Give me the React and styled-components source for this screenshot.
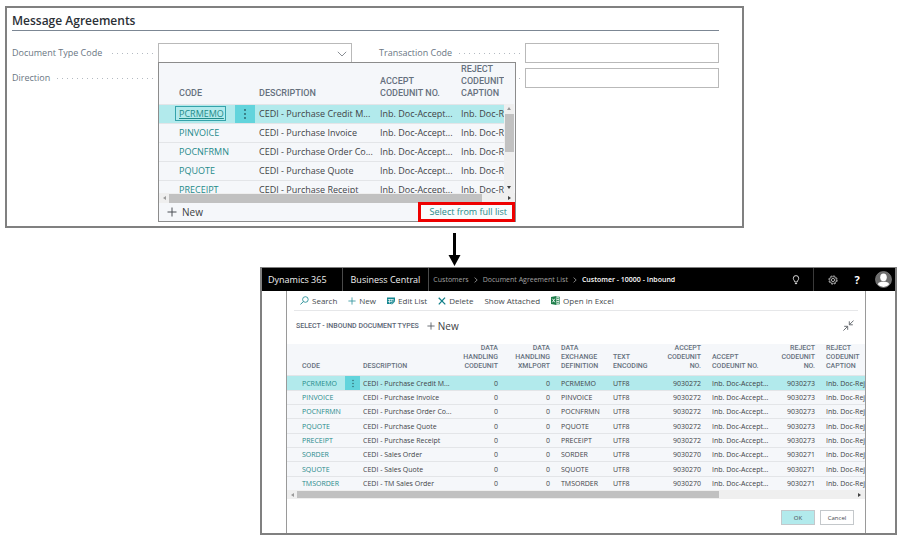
import React from "react";
import styled, { createGlobalStyle, css } from "styled-components";

const GlobalStyle = createGlobalStyle`
  *, *::before, *::after { box-sizing: border-box; }
  body { margin: 0; background: #fff; font-family: "Open Sans", "Noto Sans", sans-serif; color: #3c4043; }
  button, input, select { font: inherit; color: inherit; }
`;

const HEAD_FONT = `Roboto, "Open Sans", sans-serif`;

const Page = styled.main`
  display: flex;
  flex-direction: column;
  padding: 6px 6px 6px 5px;
`;

const buttonReset = css`
  border: 0;
  padding: 0;
  background: none;
  cursor: pointer;
`;

/* ---- Message agreements card ---- */

const Card = styled.section`
  margin-right: 153px;
  border: 2px solid #808080;
  padding: 5px 23px 138px 5px;
  background: #fff;
`;

const CardTitle = styled.h2`
  margin: 0;
  padding-bottom: 1px;
  border-bottom: 1px solid #7c8794;
  font-size: 12px;
  font-weight: 600;
  line-height: 16px;
  color: #2b3036;
`;

const FieldGrid = styled.div`
  display: grid;
  grid-template-columns: 1fr 1fr;
  gap: 5px 27px;
  margin-top: 12px;
`;

const Field = styled.div`
  position: relative;
  display: grid;
  grid-template-columns: 146px 1fr;
  align-items: center;
  height: 20px;
`;

const LabelCell = styled.div`
  display: flex;
  align-items: center;
  gap: 6px;
  padding-right: 5px;
`;

const Label = styled.label`
  font-size: 9px;
  line-height: 14px;
  color: #6a7683;
  white-space: nowrap;
`;

const Dots = styled.span`
  flex: 1;
  height: 1px;
  margin-top: 1px;
  background: repeating-linear-gradient(to left, #b4bac2 0 1px, transparent 1px 5px);
`;

const boxStyle = css`
  width: 100%;
  height: 20px;
  border: 1px solid #b9b9b9;
  border-radius: 0;
  padding: 0 6px;
  background: #fff;
  font-size: 10px;
`;

const TextBox = styled.input`${boxStyle}`;

const SelectWrap = styled.div`
  position: relative;
  display: flex;
  svg {
    position: absolute;
    right: 5px;
    top: 8px;
    pointer-events: none;
  }
`;

const SelectBox = styled.select`
  ${boxStyle}
  appearance: none;
`;

/* ---- Lookup menu ---- */

const Lookup = styled.div`
  position: absolute;
  left: 146px;
  top: 19px;
  z-index: 2;
  width: 358px;
  border: 1px solid #8c8c8c;
  background: #f5f7fa;
`;

const LookupBody = styled.div`
  display: flex;
  height: 130px;
`;

const Viewport = styled.div`
  flex: 1;
  min-width: 0;
  overflow: hidden;
`;

const VTrack = styled.div`
  display: flex;
  flex-direction: column;
  align-items: center;
  justify-content: space-between;
  width: 10px;
  margin: 41px 1px 0 0;
  padding: 3px 0 4px;
  background: #efefef;
`;

const VThumb = styled.div`
  width: 9px;
  height: 38px;
  margin: 4px 0 auto;
  background: #c1c1c1;
`;

const HTrack = styled.div`
  display: flex;
  align-items: center;
  gap: 3px;
  height: ${(p) => p.$height};
  padding: 0 4px;
  background: #efefef;
`;

const HThumb = styled.div`
  width: ${(p) => p.$size};
  height: ${(p) => p.$thick};
  margin-right: auto;
  background: #c1c1c1;
`;

const Arrowhead = styled.span`
  border: solid transparent;
  ${(p) =>
    ({
      left: "border-width: 2px 3px 2px 0; border-right-color: #9a9a9a;",
      right: "border-width: 2px 0 2px 3px; border-left-color: #404040;",
      up: "border-width: 0 2px 3px; border-bottom-color: #9a9a9a;",
      down: "border-width: 3px 2px 0; border-top-color: #404040;",
    })[p.$dir]}
`;

const LookupFooter = styled.div`
  display: flex;
  align-items: center;
  justify-content: space-between;
  height: 18px;
  padding-left: 8px;
`;

const NewButton = styled.button`
  ${buttonReset}
  display: inline-flex;
  align-items: center;
  gap: ${(p) => p.$gap || "5px"};
  font-size: 10px;
  line-height: 16px;
  color: #3c4043;
`;

const FullListLink = styled.a`
  height: 20px;
  border: 3px solid #ee0000;
  padding: 0 5px 0 9px;
  background: #f9fbfc;
  font-size: 9px;
  line-height: 14px;
  color: #1f8a8a;
  text-decoration: none;
`;

/* ---- Data grids ---- */

const Grid = styled.table`
  width: 100%;
  table-layout: fixed;
  border-collapse: separate;
  border-spacing: 0;
  background: #f5f7fa;
`;

const Col = styled.col`
  width: ${(p) => p.$w};
`;

const Th = styled.th`
  vertical-align: bottom;
  text-align: ${(p) => (p.$right ? "right" : "left")};
  font-family: ${HEAD_FONT};
  font-weight: 500;
  color: #66717e;
  white-space: pre-line;
`;

const Td = styled.td`
  white-space: nowrap;
  text-align: ${(p) => (p.$right ? "right" : "left")};
  color: #3f4347;
`;

const LookupGrid = styled(Grid)`
  th { height: 41px; padding: 0 0 5px 4px; font-size: 9px; line-height: 12px; }
  td { height: 19px; padding: 0 0 0 4px; border-top: 1px solid #e3e5e8; font-size: 9px; line-height: 14px; }
  th:first-child, td:first-child { padding-left: 20px; }
`;

const ListGrid = styled(Grid)`
  th { height: 31px; padding: 0 8px 4px 3px; font-size: 7px; line-height: 9px; }
  td { height: 14px; padding: 0 8px 0 3px; border-top: 1px solid #e3e5e8; font-size: 7px; line-height: 11px; }
  tr:nth-child(3n + 1) td { height: 15px; }
  th:first-child, td:first-child { padding-left: 15px; }
  th:last-child, td:last-child { padding-right: 0; }
`;

const Row = styled.tr`
  ${(p) => p.$active && css`
    td { background: #b2eaec; }
    td:nth-child(2) { background: #62d4dc; }
  `}
`;

const MoreCell = styled(Td)`
  && { padding: 0; text-align: center; }
`;

const MoreButton = styled.button`
  ${buttonReset}
  display: block;
  margin: 0 auto;
`;

const CodeLink = styled.a`
  color: #1f8a8a;
  text-decoration: none;
  ${(p) => p.$focused && css`
    margin-left: -3px;
    padding: 0 1px 0 3px;
    outline: 1px solid #35a3ab;
    text-decoration: underline;
  `}
`;

/* ---- Step arrow ---- */

const StepArrow = styled.svg`
  display: block;
  margin-left: 443px;
`;

/* ---- List window ---- */

const Window = styled.section`
  margin-left: 255px;
  border: 2px solid #808080;
  border-top-width: 1px;
  background: #fff;
`;

const TopBar = styled.header`
  display: flex;
  align-items: stretch;
  height: 23px;
  background: #000;
  color: #e6e6e6;
`;

const Brand = styled.a`
  display: flex;
  align-items: center;
  padding: ${(p) => p.$pad};
  border-right: 1px solid #4a4a4a;
  font-size: 9px;
  color: #f0f0f0;
  text-decoration: none;
  white-space: nowrap;
`;

const Crumbs = styled.nav`
  display: flex;
  align-items: center;
  gap: 5px;
  margin-right: auto;
  padding-left: 4px;
  font-size: 7px;
  white-space: nowrap;
`;

const Crumb = styled.a`
  color: ${(p) => (p.$current ? "#fff" : "#a3a3a3")};
  font-weight: ${(p) => (p.$current ? 600 : 400)};
  text-decoration: none;
`;

const BarTools = styled.div`
  display: flex;
  align-items: center;
  gap: 12px;
  padding: 0 3px 0 13px;
`;

const BarButton = styled.button`
  ${buttonReset}
  display: grid;
  place-items: center;
  width: ${(p) => p.$w || "12px"};
  font-size: 11px;
  font-weight: 700;
  line-height: 16px;
  color: #fff;
`;

const BulbSlot = styled.div`
  display: flex;
  align-items: center;
  padding-right: 11px;
  border-right: 1px solid #3a3a3a;
`;

const Sheet = styled.div`
  margin: 0 29px 0 24px;
  border: solid #9a9a9a;
  border-width: 0 1px;
`;

const Toolbar = styled.div`
  display: flex;
  align-items: center;
  gap: 11px;
  height: 20px;
  margin: 0 7px;
  padding-left: 6px;
  border-bottom: 1px solid #e6e7e9;
`;

const ToolButton = styled.button`
  ${buttonReset}
  display: inline-flex;
  align-items: center;
  gap: 3px;
  font-size: 8px;
  line-height: 12px;
  color: #45494d;
  white-space: nowrap;
`;

const Heading = styled.div`
  display: flex;
  align-items: center;
  gap: 8px;
  height: 33px;
  padding: 0 11px 4px 9px;
`;

const ListTitle = styled.h3`
  margin: 0;
  font-family: ${HEAD_FONT};
  font-size: 7px;
  font-weight: 500;
  color: #5b6675;
`;

const CollapseButton = styled.button`
  ${buttonReset}
  display: grid;
  margin-left: auto;
`;

const Actions = styled.footer`
  display: flex;
  justify-content: flex-end;
  gap: 5px;
  padding: 11px 11px 8px;
`;

const ActionButton = styled.button`
  width: 34px;
  height: 15px;
  border: 1px solid #c4c8cb;
  padding: 0;
  background: ${(p) => (p.$primary ? "#b2eaec" : "#fff")};
  font-size: 6px;
  line-height: 12px;
  color: #45494d;
  cursor: pointer;
`;

/* ---- Icons ---- */

const Plus = ({ size, color }) => (
  <svg width={size} height={size} viewBox="0 0 10 10" aria-hidden="true">
    <path d="M5 0.5V9.5M0.5 5H9.5" stroke={color} strokeWidth="1" fill="none" />
  </svg>
);

const MoreDots = ({ size }) => (
  <svg width="4" height={size} viewBox="0 0 4 12" aria-hidden="true" display="block">
    <g fill="#2b5d63">
      <circle cx="2" cy="2" r="0.9" />
      <circle cx="2" cy="6" r="0.9" />
      <circle cx="2" cy="10" r="0.9" />
    </g>
  </svg>
);

const SearchIcon = () => (
  <svg width="9" height="9" viewBox="0 0 9 9" aria-hidden="true">
    <circle cx="5.4" cy="3.5" r="2.8" fill="none" stroke="#2a9199" strokeWidth="0.9" />
    <path d="M3.4 5.5L0.4 8.5" stroke="#2a9199" strokeWidth="1" />
  </svg>
);

const EditListIcon = () => (
  <svg width="8" height="8" viewBox="0 0 8 8" aria-hidden="true">
    <path d="M0 0.5H8V4L5.5 7H0Z" fill="#13858f" />
    <path d="M0.8 2.6H6.8M0.8 4.6H4.8M2.6 2V6.4M4.8 2V4.8" stroke="#fff" strokeWidth="0.7" />
    <path d="M4 7.8L4.6 5.9L7 3.5L8 4.5L5.7 7Z" fill="#13858f" stroke="#fff" strokeWidth="0.4" />
  </svg>
);

const DeleteIcon = () => (
  <svg width="8" height="8" viewBox="0 0 8 8" aria-hidden="true">
    <path d="M0.7 0.8L7.3 7.4M7 0.6L0.8 7.4" stroke="#13808a" strokeWidth="1.3" fill="none" />
  </svg>
);

const ExcelIcon = () => (
  <svg width="9" height="9" viewBox="0 0 9 9" aria-hidden="true">
    <path d="M4.5 1H8.6V8H4.5Z" fill="#fff" stroke="#1e7e4a" strokeWidth="0.7" />
    <path d="M5.5 2.7H7.8M5.5 4.5H7.8M5.5 6.3H7.8" stroke="#1e7e4a" strokeWidth="0.9" />
    <path d="M0 0.9L5.3 0V9L0 8.1Z" fill="#1e7e4a" />
    <path d="M1.4 2.7L3.8 6.3M3.8 2.7L1.4 6.3" stroke="#fff" strokeWidth="0.9" />
  </svg>
);

const BulbIcon = () => (
  <svg width="8" height="10" viewBox="0 0 8 10" aria-hidden="true">
    <path d="M2.8 7C2.8 5.6 1.3 5 1.3 3.3A2.7 2.7 0 0 1 6.7 3.3C6.7 5 5.2 5.6 5.2 7Z" fill="none" stroke="#e8e8e8" strokeWidth="0.9" />
    <path d="M2.9 8.6H5.1" stroke="#e8e8e8" strokeWidth="1" />
  </svg>
);

const GearIcon = () => (
  <svg width="10" height="10" viewBox="0 0 10 10" aria-hidden="true" fill="none" stroke="#d4d4d4">
    <circle cx="5" cy="5" r="4.1" strokeWidth="0.9" strokeDasharray="2 1.2" />
    <circle cx="5" cy="5" r="3.4" strokeWidth="0.6" />
    <circle cx="5" cy="5" r="1.6" strokeWidth="0.8" />
  </svg>
);

const Avatar = () => (
  <svg width="17" height="17" viewBox="0 0 17 17" aria-hidden="true">
    <circle cx="8.5" cy="8.5" r="8" fill="#6d6d6d" stroke="#8a8a8a" strokeWidth="0.7" />
    <ellipse cx="8.5" cy="6.3" rx="3.3" ry="3.9" fill="#fff" />
    <path d="M2.8 13.2C3.6 11 5.6 10.8 8.5 10.8S13.4 11 14.2 13.2A7.3 7.3 0 0 1 2.8 13.2Z" fill="#fff" />
  </svg>
);

const CollapseIcon = () => (
  <svg width="11" height="11" viewBox="0 0 11 11" aria-hidden="true" fill="none" stroke="#5a5f65" strokeWidth="0.9">
    <path d="M10.6 0.5L6.6 4.5M6.3 1.3V4.8H9.8" />
    <path d="M0.4 10.6L4.4 6.6M1.2 6.3H4.7V9.8" />
  </svg>
);

const ChevronDown = () => (
  <svg width="10" height="6" viewBox="0 0 10 6" aria-hidden="true">
    <path d="M0.8 0.8L5 5L9.2 0.8" fill="none" stroke="#8a8f95" strokeWidth="1" />
  </svg>
);

const ChevronRight = () => (
  <svg width="4" height="6" viewBox="0 0 4 6" aria-hidden="true">
    <path d="M0.6 0.6L3.2 3L0.6 5.4" fill="none" stroke="#a3a3a3" strokeWidth="0.8" />
  </svg>
);

/* ---- Data ---- */

const types = [
  ["PCRMEMO", "CEDI - Purchase Credit M...", "9030272", "9030273"],
  ["PINVOICE", "CEDI - Purchase Invoice", "9030272", "9030273"],
  ["POCNFRMN", "CEDI - Purchase Order Co...", "9030272", "9030273"],
  ["PQUOTE", "CEDI - Purchase Quote", "9030272", "9030273"],
  ["PRECEIPT", "CEDI - Purchase Receipt", "9030272", "9030273"],
  ["SORDER", "CEDI - Sales Order", "9030270", "9030271"],
  ["SQUOTE", "CEDI - Sales Quote", "9030270", "9030271"],
  ["TMSORDER", "CEDI - TM Sales Order", "9030270", "9030271"],
];

const listColumns = [
  { title: "CODE", w: "58px" },
  { title: "", w: "15px" },
  { title: "DESCRIPTION", w: "95px" },
  { title: "DATA\nHANDLING\nCODEUNIT", w: "51px", right: true },
  { title: "DATA\nHANDLING\nXMLPORT", w: "52px", right: true },
  { title: "DATA\nEXCHANGE\nDEFINITION", w: "52px" },
  { title: "TEXT\nENCODING", w: "45px" },
  { title: "ACCEPT\nCODEUNIT\nNO.", w: "54px", right: true },
  { title: "ACCEPT\nCODEUNIT NO.", w: "63px" },
  { title: "REJECT\nCODEUNIT\nNO.", w: "51px", right: true },
  { title: "REJECT\nCODEUNIT\nCAPTION", w: "auto" },
];

const lookupColumns = [
  { title: "CODE", w: "76px" },
  { title: "", w: "20px" },
  { title: "DESCRIPTION", w: "121px" },
  { title: "ACCEPT\nCODEUNIT NO.", w: "81px" },
  { title: "REJECT\nCODEUNIT\nCAPTION", w: "auto" },
];

const GridHead = ({ columns }) => (
  <>
    <colgroup>
      {columns.map((c, i) => <Col key={i} $w={c.w} />)}
    </colgroup>
    <thead>
      <tr>
        {columns.map((c, i) => <Th key={i} $right={c.right}>{c.title}</Th>)}
      </tr>
    </thead>
  </>
);

const More = ({ active, size }) => (
  <MoreCell>
    {active && <MoreButton aria-label="Show more options"><MoreDots size={size} /></MoreButton>}
  </MoreCell>
);

const LookupMenu = () => (
  <Lookup>
    <LookupBody>
      <Viewport>
        <LookupGrid>
          <GridHead columns={lookupColumns} />
          <tbody>
            {types.slice(0, 5).map(([code, desc], i) => (
              <Row key={code} $active={i === 0}>
                <Td><CodeLink href="#" $focused={i === 0}>{code}</CodeLink></Td>
                <More active={i === 0} size="12" />
                <Td>{desc}</Td>
                <Td>Inb. Doc-Accept...</Td>
                <Td>Inb. Doc-R</Td>
              </Row>
            ))}
          </tbody>
        </LookupGrid>
      </Viewport>
      <VTrack><Arrowhead $dir="up" /><VThumb /><Arrowhead $dir="down" /></VTrack>
    </LookupBody>
    <HTrack $height="10px">
      <Arrowhead $dir="left" /><HThumb $size="313px" $thick="9px" /><Arrowhead $dir="right" />
    </HTrack>
    <LookupFooter>
      <NewButton><Plus size="10" color="#4a4f55" />New</NewButton>
      <FullListLink href="#list">Select from full list</FullListLink>
    </LookupFooter>
  </Lookup>
);

const AgreementsCard = () => (
  <Card>
    <CardTitle>Message Agreements</CardTitle>
    <FieldGrid>
      <Field>
        <LabelCell><Label htmlFor="doc-type">Document Type Code</Label><Dots /></LabelCell>
        <SelectWrap>
          <SelectBox id="doc-type" defaultValue=""><option value="" /></SelectBox>
          <ChevronDown />
        </SelectWrap>
        <LookupMenu />
      </Field>
      <Field>
        <LabelCell><Label htmlFor="transaction">Transaction Code</Label><Dots /></LabelCell>
        <TextBox id="transaction" />
      </Field>
      <Field>
        <LabelCell><Label htmlFor="direction">Direction</Label><Dots /></LabelCell>
        <TextBox id="direction" />
      </Field>
      <Field>
        <LabelCell><Dots /></LabelCell>
        <TextBox aria-label="Transaction detail" />
      </Field>
    </FieldGrid>
  </Card>
);

const ListWindow = () => (
  <Window id="list">
    <TopBar>
      <Brand href="#" $pad="0 15px 0 6px">Dynamics 365</Brand>
      <Brand href="#" $pad="0 8px">Business Central</Brand>
      <Crumbs>
        <Crumb href="#">Customers</Crumb><ChevronRight />
        <Crumb href="#">Document Agreement List</Crumb><ChevronRight />
        <Crumb href="#" $current>Customer - 10000 - Inbound</Crumb>
      </Crumbs>
      <BulbSlot><BarButton aria-label="Tips"><BulbIcon /></BarButton></BulbSlot>
      <BarTools>
        <BarButton aria-label="Settings"><GearIcon /></BarButton>
        <BarButton aria-label="Help">?</BarButton>
        <BarButton aria-label="Account" $w="17px"><Avatar /></BarButton>
      </BarTools>
    </TopBar>
    <Sheet>
      <Toolbar>
        <ToolButton><SearchIcon />Search</ToolButton>
        <ToolButton><Plus size="8" color="#2a9199" />New</ToolButton>
        <ToolButton><EditListIcon />Edit List</ToolButton>
        <ToolButton><DeleteIcon />Delete</ToolButton>
        <ToolButton>Show Attached</ToolButton>
        <ToolButton><ExcelIcon />Open in Excel</ToolButton>
      </Toolbar>
      <Heading>
        <ListTitle>SELECT - INBOUND DOCUMENT TYPES</ListTitle>
        <NewButton $gap="3px"><Plus size="8" color="#4a4f55" />New</NewButton>
        <CollapseButton aria-label="Collapse"><CollapseIcon /></CollapseButton>
      </Heading>
      <Viewport>
        <ListGrid>
          <GridHead columns={listColumns} />
          <tbody>
            {types.map(([code, desc, accept, reject], i) => (
              <Row key={code} $active={i === 0}>
                <Td><CodeLink href="#">{code}</CodeLink></Td>
                <More active={i === 0} size="9" />
                <Td>{desc}</Td>
                <Td $right>0</Td>
                <Td $right>0</Td>
                <Td>{code}</Td>
                <Td>UTF8</Td>
                <Td $right>{accept}</Td>
                <Td>Inb. Doc-Accept...</Td>
                <Td $right>{reject}</Td>
                <Td>Inb. Doc-Rej</Td>
              </Row>
            ))}
          </tbody>
        </ListGrid>
      </Viewport>
      <HTrack $height="9px">
        <Arrowhead $dir="left" /><HThumb $size="74%" $thick="7px" /><Arrowhead $dir="right" />
      </HTrack>
      <Actions>
        <ActionButton $primary>OK</ActionButton>
        <ActionButton>Cancel</ActionButton>
      </Actions>
    </Sheet>
  </Window>
);

export default function App() {
  return (
    <>
      <GlobalStyle />
      <Page>
        <AgreementsCard />
        <StepArrow width="13" height="39" viewBox="0 0 13 39" aria-hidden="true">
          <path d="M5 5H8V27H12.5L6.5 38L0.5 27H5Z" fill="#000" />
        </StepArrow>
        <ListWindow />
      </Page>
    </>
  );
}
